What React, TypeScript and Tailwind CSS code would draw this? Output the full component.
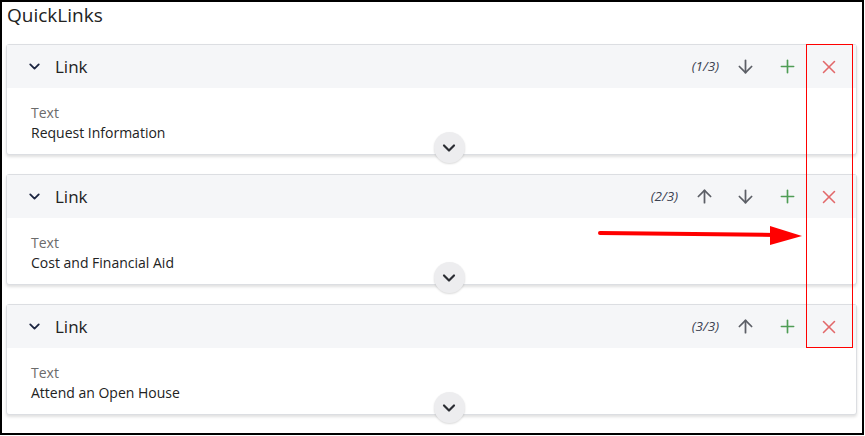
import { ChevronDown, ArrowUp, ArrowDown, Plus, X } from 'lucide-react';

const links = [
  { value: 'Request Information', index: 1 },
  { value: 'Cost and Financial Aid', index: 2 },
  { value: 'Attend an Open House', index: 3 },
];

const total = 3;

function LinkCard({ value, index }: { value: string; index: number }) {
  return (
    <div className="relative rounded-[3px] border border-[#dcdee2] bg-white shadow-[0_2px_3px_rgba(0,0,0,0.12)]">
      {/* Header */}
      <div className="flex h-[43px] items-center bg-[#f5f6f8] pl-[19px] pr-[6px]">
        <ChevronDown className="h-[17px] w-[17px] text-[#1b2540]" strokeWidth={2.6} />
        <span className="ml-[12px] text-[17px] text-[#222]">Link</span>
        <div className="ml-auto flex items-center">
          <span className="mr-[6px] text-[13.5px] italic text-[#3b4150]">
            ({index}/{total})
          </span>
          {index > 1 && (
            <button className="flex h-[40px] w-[41px] items-center justify-center text-[#5c5f66]">
              <ArrowUp className="h-[21px] w-[21px]" strokeWidth={2} />
            </button>
          )}
          {index < total && (
            <button className="flex h-[40px] w-[41px] items-center justify-center text-[#5c5f66]">
              <ArrowDown className="h-[21px] w-[21px]" strokeWidth={2} />
            </button>
          )}
          <button className="flex h-[40px] w-[42px] items-center justify-center text-[#4f9d55]">
            <Plus className="h-[21px] w-[21px]" strokeWidth={1.9} />
          </button>
          <button className="flex h-[40px] w-[42px] items-center justify-center text-[#e2686a]">
            <X className="h-[22px] w-[22px]" strokeWidth={1.7} />
          </button>
        </div>
      </div>

      {/* Content */}
      <div className="h-[66px] pl-[24px] pt-[15px]">
        <div className="text-[14px] leading-[20px] text-[#6b6b6b]">Text</div>
        <div className="text-[14px] leading-[20px] text-[#222]">{value}</div>
      </div>

      <button className="absolute bottom-[-9px] left-1/2 flex h-[31px] w-[31px] translate-x-[2px] items-center justify-center rounded-full bg-[#ededef] shadow-[0_1px_2px_rgba(0,0,0,0.15)]">
        <ChevronDown className="h-[20px] w-[20px] text-[#2b2d33]" strokeWidth={2.6} />
      </button>
    </div>
  );
}

export default function App() {
  return (
    <div
      className="relative h-[435px] w-[864px] border-2 border-black bg-white"
      style={{ fontFamily: '"Open Sans", "Noto Sans", sans-serif' }}
    >
      <div className="flex h-[40px] items-start pl-[5px] text-[19px] leading-[26px] text-[#222]">
        QuickLinks
      </div>

      <div className="flex flex-col gap-[19px] pl-[4px] pr-[5px] pt-[2px]">
        {links.map((l) => (
          <LinkCard key={l.index} value={l.value} index={l.index} />
        ))}
      </div>

      {/* annotation: red frame around delete buttons */}
      <div className="pointer-events-none absolute left-[804px] top-[42px] h-[304px] w-[47px] border-[1.5px] border-[#ff0000]" />

      {/* annotation: red arrow */}
      <svg
        className="pointer-events-none absolute left-[594px] top-[220px]"
        width="210"
        height="26"
        viewBox="0 0 210 26"
      >
        <line x1="4" y1="11" x2="180" y2="13" stroke="#ff0000" strokeWidth="4" strokeLinecap="round" />
        <polygon points="174,4 206,14 174,23" fill="#ff0000" />
      </svg>
    </div>
  );
}
